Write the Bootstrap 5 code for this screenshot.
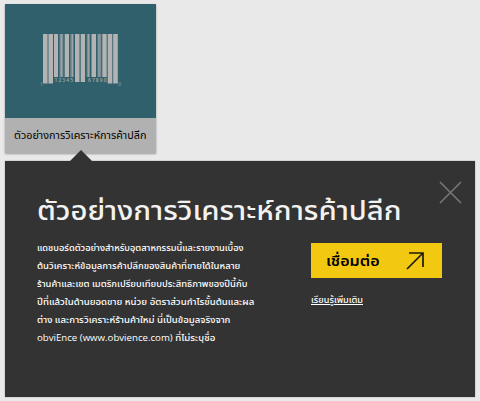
<!DOCTYPE html>
<html lang="th">
<head>
<meta charset="utf-8">
<meta name="viewport" content="width=device-width, initial-scale=1">
<title>ตัวอย่างการวิเคราะห์การค้าปลีก</title>
<link href="https://cdn.jsdelivr.net/npm/bootstrap@5.3.0/dist/css/bootstrap.min.css" rel="stylesheet">
<style>
body{background:#e9e9e9;font-family:"Open Sans","Noto Sans Thai","Noto Sans",sans-serif;height:401px;overflow:hidden;padding:4px 4px 0 5px}
.sample-tile{width:151px;height:149px;background:#b1b1b1;box-shadow:0 1px 2px #999}
.tile-art{height:114px;background:#30606b}
.tile-name{height:35px;font-size:10.5px;color:#000}
.detail{margin-top:8px;height:236px;width:470px;background:#333;box-shadow:0 0 1px #777;color:#f2f2f2}
.pointer-tip{left:65px;top:-11px;width:22px;height:11px;background:#333;clip-path:polygon(50% 0,100% 100%,0 100%)}
.close-x{left:434px;top:20px;width:23px;height:23px}
.detail-title{font-size:27px;line-height:40px;height:40px;margin:29px 0 0 32px;white-space:nowrap;font-weight:500}
.blurb{width:273px;padding-left:32px;padding-top:9px;font-size:9.6px;font-weight:500;line-height:18px;white-space:nowrap;color:#fff}
.go-btn{width:131px;height:35px;margin-top:13px;background:#f2c811;color:#000;font-size:14px;font-weight:600;padding:0 18px 0 15px}
.more-link{font-size:8.6px;line-height:14px;margin-top:15px;color:#fff;white-space:nowrap;font-weight:500}
.fit{display:inline-block;transform-origin:0 50%}
</style>
<script src="https://cdn.jsdelivr.net/npm/bootstrap@5.3.0/dist/js/bootstrap.bundle.min.js"></script>
</head>
<body>
<div class="sample-tile">
  <div class="tile-art d-flex">
    <svg width="151" height="114" viewBox="5 4 151 114">
      <g fill="#b3b3b3">
        <path d="M43 34h4.3v49.500h-4.300zM48.700 34h4.300v49.500h-4.300zM54 34h4v43h-4zM64.700 34h4.300v43h-4.300zM75 34h4.500v48h-4.500zM80.700 34h4.300v48h-4.300zM91.500 34h4.500v43h-4.500zM102.300 34h4.400v43h-4.400zM107.700 34h4.600v49.500h-4.600zM113.200 34h4.600v49.500h-4.600z"/>
        <path opacity=".55" d="M47.300 34h1.400v49.500h-1.400zM59.500 34h3.800v43h-3.800zM70.300 34h3.400v43h-3.400zM86.700 34h3.300v43h-3.300zM97.500 34h3.800v43h-3.800z"/>
        <path opacity=".6" d="M60.800 34h1.400v43h-1.400zM72 34h1v43h-1zM88 34h1v43h-1zM98.500 34h1v43h-1z"/>
        <g font-size="5" font-family="Open Sans" font-weight="600" opacity=".9"><text x="54.500" y="82" textLength="18.500">12345</text><text x="88" y="82" textLength="18.500">67890</text><text x="40" y="86" opacity=".6">1</text><text x="118.200" y="86" opacity=".6">0</text></g>
      </g>
    </svg>
  </div>
  <div class="tile-name d-flex align-items-center text-nowrap"><span class="fit" data-w="132" style="margin-left:9px">ตัวอย่างการวิเคราะห์การค้าปลีก</span></div>
</div>
<div class="detail position-relative">
  <div class="pointer-tip position-absolute"></div>
  <svg class="close-x position-absolute" viewBox="0 0 23 23" stroke="#777" stroke-width="1.6"><path d="M1 1L22 22M22 1L1 22"/></svg>
  <div class="d-flex"><h1 class="detail-title"><span class="fit" data-w="365">ตัวอย่างการวิเคราะห์การค้าปลีก</span></h1></div>
  <div class="d-flex">
    <div class="blurb">
      <div><span class="fit" data-w="207">แดชบอร์ดตัวอย่างสำหรับอุตสาหกรรมนี้และรายงานเบื้อง</span></div>
      <div><span class="fit" data-w="203">ต้นวิเคราะห์ข้อมูลการค้าปลีกของสินค้าที่ขายได้ในหลาย</span></div>
      <div><span class="fit" data-w="210">ร้านค้าและเขต เมตริกเปรียบเทียบประสิทธิภาพของปีนี้กับ</span></div>
      <div><span class="fit" data-w="217">ปีที่แล้วในด้านยอดขาย หน่วย อัตราส่วนกำไรขั้นต้นและผล</span></div>
      <div><span class="fit" data-w="193">ต่าง และการวิเคราะห์ร้านค้าใหม่ นี่เป็นข้อมูลจริงจาก</span></div>
      <div><span class="fit" data-w="178">obviEnce (www.obvience.com) ที่ไม่ระบุชื่อ</span></div>
    </div>
    <div class="flex-shrink-0 ms-auto me-auto">
      <a class="go-btn d-flex align-items-center justify-content-between text-decoration-none" href="#"><span class="fit" data-w="54">เชื่อมต่อ</span>
        <svg width="18" height="18" viewBox="0 0 18 18" fill="none" stroke="#1c1a08" stroke-width="1.7"><path d="M1 17L17 1M3 1H17V15"/></svg></a>
      <a class="more-link d-block" href="#"><span class="fit text-decoration-underline" data-w="52">เรียนรู้เพิ่มเติม</span></a>
    </div>
  </div>
</div>
<script>
// Stretch each line to its set measure
document.querySelectorAll('.fit').forEach(function(e){
  e.style.transform='scaleX('+(e.dataset.w/e.offsetWidth)+')';
});
</script>
</body>
</html>
